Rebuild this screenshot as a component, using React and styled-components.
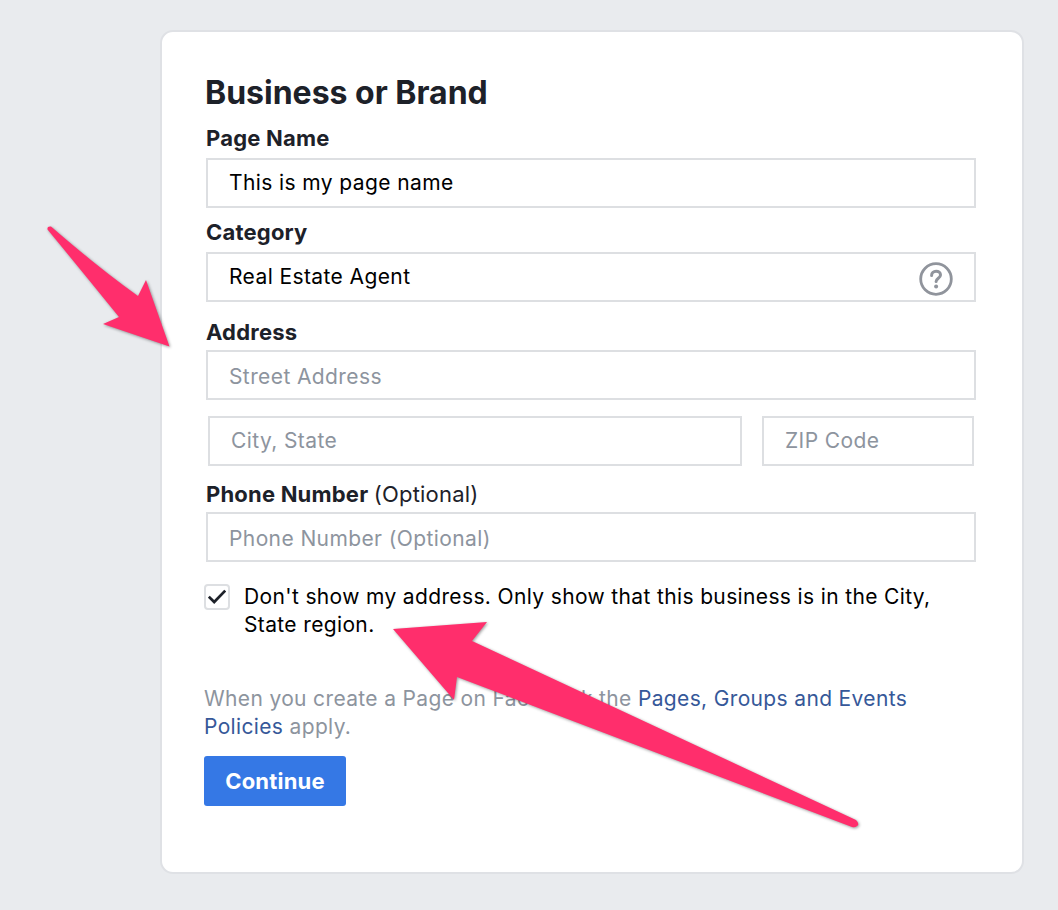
import React from 'react'
import styled, { createGlobalStyle } from 'styled-components'

const Global = createGlobalStyle`
  html, body {
    margin: 0;
    padding: 0;
    background: #e9ebee;
    font-family: Inter, "Liberation Sans", sans-serif;
  }
`;

const Page = styled.div`
  position: relative;
  width: 1058px;
  height: 910px;
  padding: 30px 34px 0 160px;
  box-sizing: border-box;
  overflow: hidden;
`;

const Card = styled.form`
  box-sizing: border-box;
  width: 864px;
  height: 844px;
  padding: 42px 46px 0 43px;
  background: #fff;
  border: 2px solid #dfe1e5;
  border-radius: 13px;
`;

const Title = styled.h1`
  margin: 0 0 13px 0;
  font-size: 32px;
  line-height: 38px;
  font-weight: 700;
  color: #1d2129;
`;

const Label = styled.label`
  display: block;
  height: 28px;
  margin: ${p => p.$top || 0}px 0 ${p => p.$bottom ?? 5}px 0;
  padding-left: 1px;
  font-size: 22px;
  line-height: 26px;
  font-weight: 700;
  letter-spacing: 0.2px;
  color: #1d2129;
`;

const Muted = styled.span`
  font-weight: 400;
`;

const FieldWrap = styled.div`
  position: relative;
  margin-left: 1px;
`;

const Input = styled.input`
  display: block;
  box-sizing: border-box;
  width: ${p => p.$width ? `${p.$width}px` : '100%'};
  height: 50px;
  padding: ${p => p.$low ? 2 : 0}px 21px ${p => p.$low ? 0 : 2}px;
  border: 2px solid #dddfe2;
  border-radius: 0;
  outline: none;
  background: #fff;
  font-family: inherit;
  font-size: 21px;
  letter-spacing: 0.4px;
  color: #000;
  &::placeholder {
    color: #8d949e;
    opacity: 1;
  }
`;

const HelpIcon = styled.svg`
  position: absolute;
  top: 10px;
  right: 23px;
  width: 34px;
  height: 34px;
`;

const Row = styled.div`
  display: flex;
  justify-content: space-between;
  margin: 16px 2px 0 3px;
`;

const CheckRow = styled.div`
  display: flex;
  align-items: flex-start;
  gap: 14px;
  margin: 21px 0 0 -1px;
`;

const CheckBox = styled.span`
  flex: none;
  display: flex;
  align-items: center;
  justify-content: center;
  box-sizing: border-box;
  width: 26px;
  height: 26px;
  margin-top: 1px;
  border: 2px solid #dddfe2;
  border-radius: 4px;
  background: #fff;
`;

const CheckText = styled.span`
  width: 720px;
  font-size: 21px;
  line-height: 28px;
  letter-spacing: 0.36px;
  color: #000;
`;

const Legal = styled.p`
  margin: 46px 0 0 -1px;
  font-size: 21px;
  line-height: 28px;
  letter-spacing: 0.35px;
  color: #8d949e;
`;

const LegalLink = styled.a`
  color: #365899;
  text-decoration: none;
`;

const Continue = styled.button`
  display: block;
  width: 142px;
  height: 50px;
  margin: 15px 0 0 -1px;
  border: none;
  border-radius: 3px;
  background: #3578e5;
  color: #fff;
  font-family: inherit;
  font-size: 22px;
  font-weight: 700;
  letter-spacing: 0.2px;
`;

const ArrowLayer = styled.svg`
  position: absolute;
  left: 0;
  top: 0;
  width: 1058px;
  height: 910px;
  pointer-events: none;
  filter: drop-shadow(1px 1px 1.5px rgba(0, 0, 0, 0.4));
`;

const App = () => (
  <Page>
    <Global />
    <Card onSubmit={e => e.preventDefault()}>
      <Title>Business or Brand</Title>
      <Label>Page Name</Label>
      <FieldWrap>
        <Input readOnly value="This is my page name" />
      </FieldWrap>
      <Label $top={11}>Category</Label>
      <FieldWrap>
        <Input readOnly value="Real Estate Agent" />
        <HelpIcon viewBox="0 0 34 34" fill="none">
          <circle cx="17" cy="17" r="15.3" stroke="#90949c" strokeWidth="2.8" />
          <path d="M12.6 13.4c0-2.6 2-4.2 4.5-4.2s4.4 1.5 4.4 3.8c0 3.2-4.4 3.4-4.4 6.6" stroke="#90949c" strokeWidth="3" strokeLinecap="round" />
          <circle cx="17.1" cy="24.4" r="2" fill="#90949c" />
        </HelpIcon>
      </FieldWrap>
      <Label $top={17} $bottom={3}>Address</Label>
      <FieldWrap>
        <Input readOnly $low placeholder="Street Address" />
      </FieldWrap>
      <Row>
        <Input readOnly $width={534} placeholder="City, State" />
        <Input readOnly $width={212} placeholder="ZIP Code" />
      </Row>
      <Label $top={15} $bottom={3}>
        Phone Number <Muted>(Optional)</Muted>
      </Label>
      <FieldWrap>
        <Input readOnly $low placeholder="Phone Number (Optional)" />
      </FieldWrap>
      <CheckRow>
        <CheckBox>
          <svg width="18" height="16" viewBox="0 0 18 16" fill="none">
            <path d="M0.8 7.6 6.2 13 17.2 1.6" stroke="#1d2129" strokeWidth="2.7" />
          </svg>
        </CheckBox>
        <CheckText>Don't show my address. Only show that this business is in the City, State region.</CheckText>
      </CheckRow>
      <Legal>
        When you create a Page on Facebook the <LegalLink href="#">Pages, Groups and Events Policies</LegalLink> apply.
      </Legal>
      <Continue type="submit">Continue</Continue>
    </Card>
    <ArrowLayer viewBox="0 0 1058 910">
      <path
        d="M47.5 229.5Q47 226 51 226.5Q100 269 138 296L146 280L169.5 346.5L103 324L119 317Q85 275 47.5 229.5Z"
        fill="#ff2e6c"
      />
      <path
        d="M393 629L487 622L472 641L856 820Q860 824 857 826Q855 828 852 827L457 677L454 700Z"
        fill="#ff2e6c"
      />
    </ArrowLayer>
  </Page>
);

export default App;
